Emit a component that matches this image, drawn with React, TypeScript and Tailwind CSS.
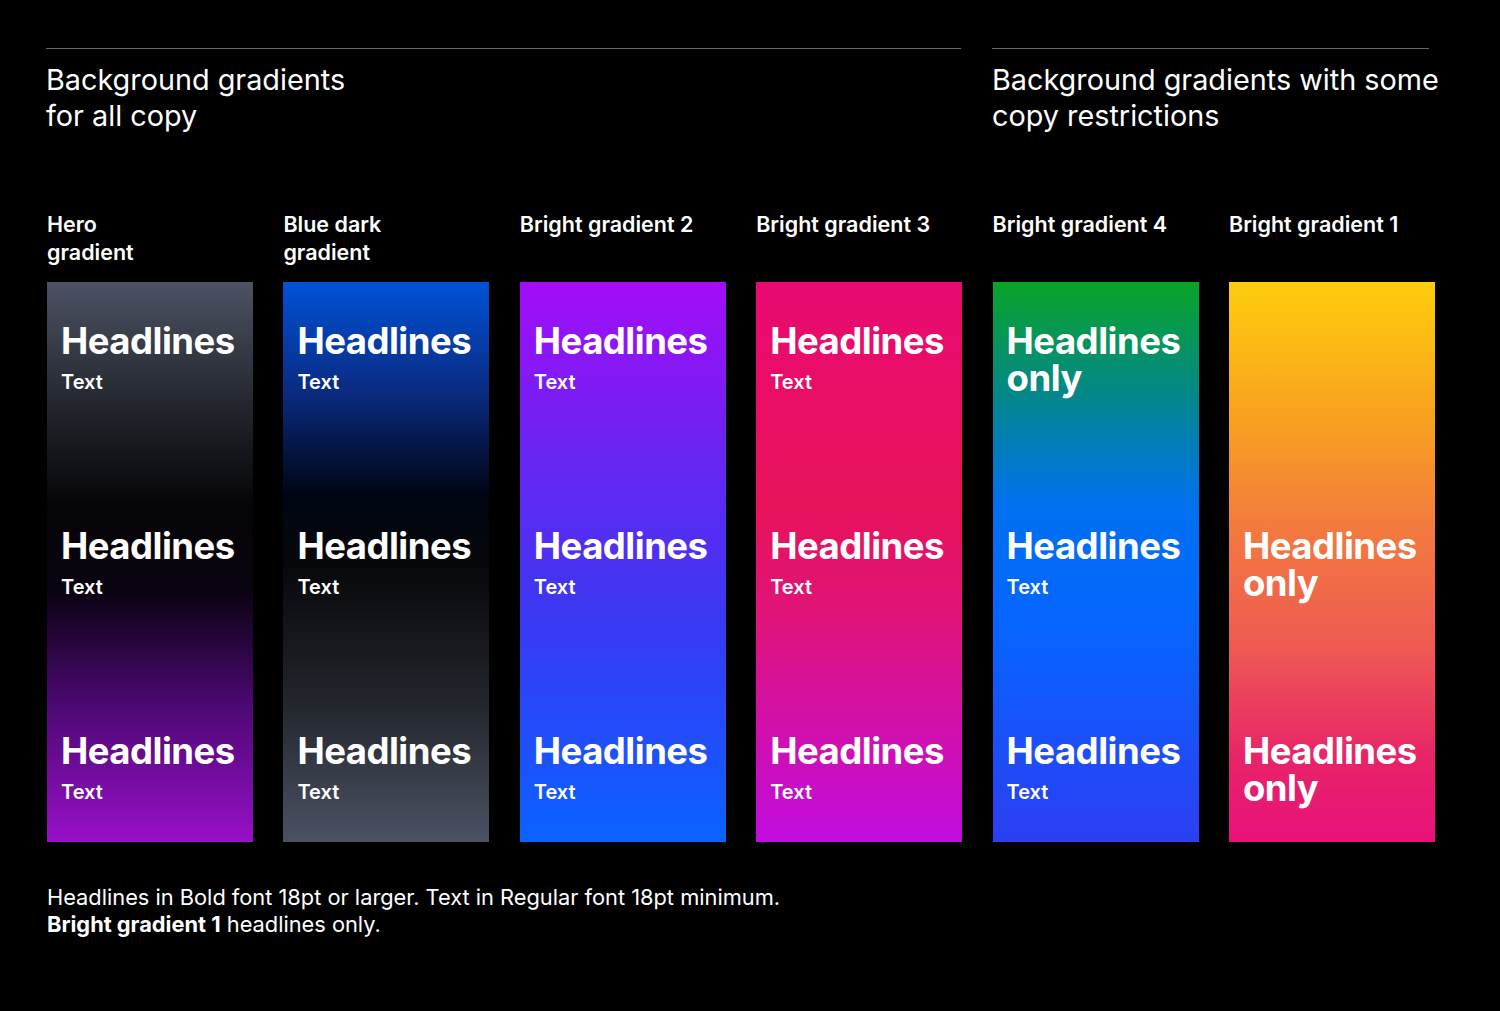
import React from "react";

const cols = [
  { label: ["Hero", "gradient"], bg: "bg-[linear-gradient(180deg,#4b5262_0%,#23262e_22%,#050507_40%,#0a0310_55%,#4a0870_75%,#9810c8_100%)]", only: [false, false, false] },
  { label: ["Blue dark", "gradient"], bg: "bg-[linear-gradient(180deg,#0052d8_0%,#0a2a80_20%,#000514_38%,#06070a_50%,#22252c_75%,#4b5263_100%)]", only: [false, false, false] },
  { label: ["Bright gradient 2"], bg: "bg-[linear-gradient(180deg,#a30cf8_0%,#6a24f2_30%,#3a38f2_60%,#0a62ff_100%)]", only: [false, false, false] },
  { label: ["Bright gradient 3"], bg: "bg-[linear-gradient(180deg,#e80a72_0%,#e8125a_40%,#e0147a_60%,#c10ce0_100%)]", only: [false, false, false] },
  { label: ["Bright gradient 4"], bg: "bg-[linear-gradient(180deg,#08a428_0%,#058a80_18%,#0070f0_40%,#0566ff_60%,#2c3ef2_100%)]", only: [true, false, false] },
  { label: ["Bright gradient 1"], bg: "bg-[linear-gradient(180deg,#ffcd0c_0%,#f8a020_25%,#f27840_45%,#ee5a52_65%,#e82468_85%,#e8107a_100%)]", only: [null, true, true] },
];

export default function App() {
  return (
    <div className="w-[1500px] h-[1011px] bg-black text-white relative" style={{ fontFamily: "Inter, 'Liberation Sans', sans-serif" }}>
      <div className="flex pl-[46px] pt-[48px]">
        <div className="w-[915px] border-t border-[#666]">
          <div className="pt-[13px] text-[28.8px] leading-[36px] font-normal">Background gradients<br />for all copy</div>
        </div>
        <div className="ml-[31px] w-[437px] border-t border-[#666]">
          <div className="pt-[13px] text-[28.8px] leading-[36px] font-normal whitespace-nowrap">Background gradients with some<br />copy restrictions</div>
        </div>
      </div>
      <div className="flex gap-[30.4px] pl-[47px] mt-[76px]">
        {cols.map((c, i) => (
          <div key={i} className="w-[206px]">
            <div className="h-[72px] text-[21.5px] leading-[28px] font-semibold">
              {c.label.map((l, j) => <div key={j}>{l}</div>)}
            </div>
            <div className={`h-[560px] ${c.bg} flex flex-col px-[14px] pt-[40px]`}>
              {c.only.map((o, k) => (
                <div key={k} className="h-[205px] shrink-0">
                  {o === null ? null : (
                    <>
                      <div className="text-[36.5px] leading-[38px] font-bold tracking-[-0.5px]">Headlines</div>
                      {o ? <div className="text-[36.5px] leading-[36px] font-bold tracking-[-0.5px]">only</div> : <div className="text-[20px] leading-[30px] font-semibold pt-[7px]">Text</div>}
                    </>
                  )}
                </div>
              ))}
            </div>
          </div>
        ))}
      </div>
      <div className="pl-[47px] mt-[42px] text-[21.8px] leading-[27px]">
        <div>Headlines in Bold font 18pt or larger. Text in Regular font 18pt minimum.</div>
        <div><span className="font-bold">Bright gradient 1</span> headlines only.</div>
      </div>
    </div>
  );
}
